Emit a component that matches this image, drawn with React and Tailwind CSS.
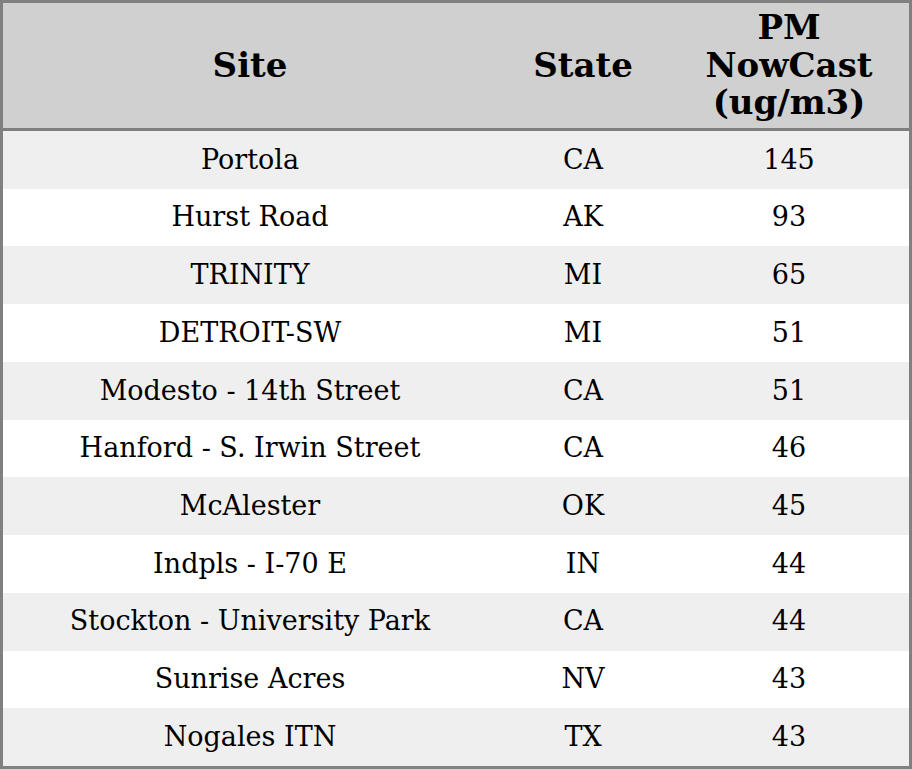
import React from 'react';

const rows = [
  ['Portola', 'CA', '145'],
  ['Hurst Road', 'AK', '93'],
  ['TRINITY', 'MI', '65'],
  ['DETROIT-SW', 'MI', '51'],
  ['Modesto - 14th Street', 'CA', '51'],
  ['Hanford - S. Irwin Street', 'CA', '46'],
  ['McAlester', 'OK', '45'],
  ['Indpls - I-70 E', 'IN', '44'],
  ['Stockton - University Park', 'CA', '44'],
  ['Sunrise Acres', 'NV', '43'],
  ['Nogales ITN', 'TX', '43'],
];

const App = () => {
  return (
    <div className="w-[912px] h-[769px] bg-white font-['DejaVu_Serif',serif] text-black">
      <div className="h-full border-[3px] border-[#808080] flex flex-col">
        {/* Header */}
        <div className="grid grid-cols-[494px_172px_240px] h-[125px] bg-[#d0d0d0] border-b-[3px] border-[#808080] box-content text-[34px] font-bold leading-[37.5px]">
          <div className="flex items-center justify-center">Site</div>
          <div className="flex items-center justify-center">State</div>
          <div className="flex items-center justify-center text-center">
            PM
            <br />
            NowCast
            <br />
            (ug/m3)
          </div>
        </div>

        {/* Rows */}
        <div className="flex-1 grid grid-rows-11 text-[27px]">
          {rows.map((r, i) => (
            <div
              key={i}
              className={`grid grid-cols-[494px_172px_240px] items-center text-center ${i % 2 === 0 ? 'bg-[#efefef]' : 'bg-white'}`}
            >
              <div>{r[0]}</div>
              <div>{r[1]}</div>
              <div>{r[2]}</div>
            </div>
          ))}
        </div>
      </div>
    </div>
  );
};

export default App;
